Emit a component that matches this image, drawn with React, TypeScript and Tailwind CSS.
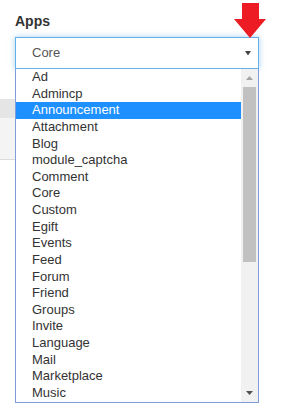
import React from "react";

const items = [
  "Ad",
  "Admincp",
  "Announcement",
  "Attachment",
  "Blog",
  "module_captcha",
  "Comment",
  "Core",
  "Custom",
  "Egift",
  "Events",
  "Feed",
  "Forum",
  "Friend",
  "Groups",
  "Invite",
  "Language",
  "Mail",
  "Marketplace",
  "Music",
];

export default function App() {
  return (
    <div
      className="relative w-[287px] h-[403px] overflow-hidden bg-white"
      style={{ fontFamily: '"Liberation Sans", Arial, sans-serif' }}
    >
      <div className="pl-[15px] pr-[28px] pt-[13px]">
        <div className="text-[14px] font-bold text-[#333] leading-[16px]">Apps</div>
        <div className="mt-[8px] h-[32px] border border-[#66afe9] shadow-[0_0_6px_rgba(102,175,233,0.6)] flex items-center justify-between pl-[16px] pr-[7px]">
          <span className="text-[13px] text-[#555]">Core</span>
          <svg width="6" height="5" viewBox="0 0 6 5" className="mt-[1px]">
            <polygon points="0,0 6,0 3,4.5" fill="#444" />
          </svg>
        </div>
      </div>

      {/* page content behind the open list */}
      <div className="mt-[30px] w-[240px]">
        <div className="h-[19px] bg-[#e5e5e5]" />
        <div className="h-[42px] bg-[#f4f4f4] border-b border-[#dcdcdc]" />
      </div>

      {/* red pointer arrow */}
      <svg
        className="absolute left-[234px] top-[3px]"
        width="32"
        height="35"
        viewBox="0 0 32 35"
      >
        <polygon points="8,0 25,0 25,16 32,16 16,35 0,16 8,16" fill="#ed1c24" />
      </svg>

      {/* open list */}
      <div className="absolute left-[15px] top-[69px] w-[244px] h-[334px] bg-white border-x border-b border-[#7f9ddb] flex">
        <div className="flex-1 flex flex-col">
          {items.map((it) => (
            <div
              key={it}
              className={
                it === "Announcement"
                  ? "h-[16.63px] leading-[16.63px] pl-[16px] text-[13px] bg-[#1e90ff] text-white"
                  : "h-[16.63px] leading-[16.63px] pl-[16px] text-[13px] text-[#333]"
              }
            >
              {it}
            </div>
          ))}
        </div>
        <div className="w-[17px] bg-[#f1f1f1] flex flex-col items-center">
          <div className="h-[18px] flex items-center justify-center">
            <svg width="7" height="4" viewBox="0 0 7 4">
              <polygon points="0,4 7,4 3.5,0" fill="#a3a3a3" />
            </svg>
          </div>
          <div className="w-[13px] h-[175px] bg-[#c1c1c1]" />
          <div className="flex-1" />
          <div className="h-[18px] flex items-center justify-center">
            <svg width="7" height="4" viewBox="0 0 7 4">
              <polygon points="0,0 7,0 3.5,4" fill="#505050" />
            </svg>
          </div>
        </div>
      </div>
    </div>
  );
}
